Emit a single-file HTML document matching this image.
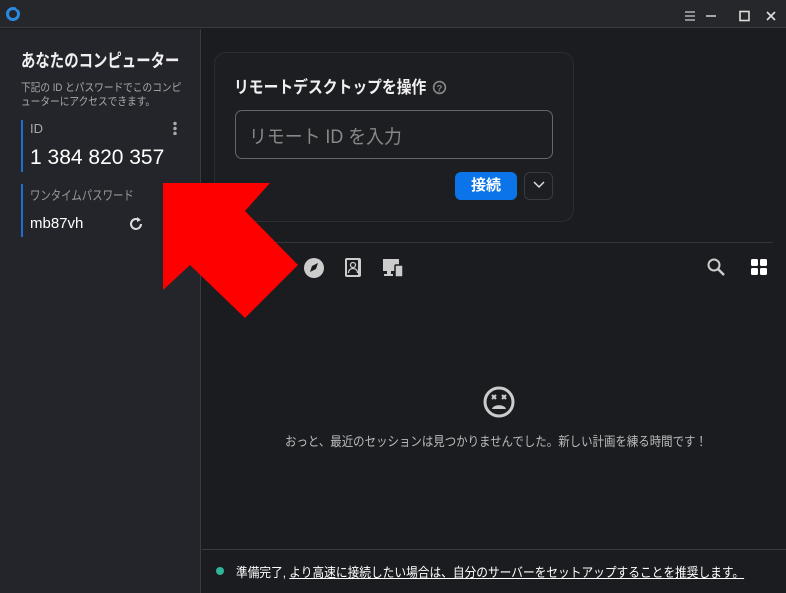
<!DOCTYPE html>
<html><head><meta charset="utf-8"><style>
*{margin:0;padding:0;box-sizing:border-box}
body{width:786px;height:593px;background:#1b1c20;font-family:"Liberation Sans","Noto Sans CJK JP",sans-serif;position:relative;overflow:hidden;color:#fff}
.abs{position:absolute}
.sx{transform-origin:0 0;white-space:nowrap}
</style></head><body>
<div class="abs" style="left:0;top:0;width:786px;height:28px;background:#26272b;border-bottom:1px solid #3a3b40"></div>
<svg class="abs" style="left:5px;top:6px" width="16" height="16" viewBox="0 0 16 16"><circle cx="8" cy="8" r="5.5" fill="none" stroke="#2a8ae0" stroke-width="3"/><path d="M12 3 L14 1" stroke="#26272b" stroke-width="3"/></svg>
<svg class="abs" style="left:683px;top:9px" width="100" height="14" viewBox="0 0 100 14"><path d="M2 3h10M2 7h10M2 11h10" stroke="#ccc" stroke-width="1.2"/><path d="M23 7h10" stroke="#ddd" stroke-width="1.4"/><rect x="57" y="2.5" width="9" height="9" fill="none" stroke="#ddd" stroke-width="1.6"/><path d="M84 3l8 8M92 3l-8 8" stroke="#ddd" stroke-width="1.6"/></svg>
<div class="abs" style="left:0;top:29px;width:201px;height:564px;background:#24252a;border-right:1px solid #3a3b40"></div>
<div class="abs sx" style="left:21px;top:47px;font-size:18px;font-weight:bold;color:#f0f0f0;transform:scaleX(0.8)">あなたのコンピューター</div>
<div class="abs sx" style="left:21px;top:81px;font-size:11px;line-height:14px;color:#aaa;transform:scaleX(0.88)">下記の ID とパスワードでこのコンピ<br>ューターにアクセスできます。</div>
<div class="abs" style="left:21px;top:120px;width:2px;height:52px;background:#1f6fd0"></div>
<div class="abs" style="left:30px;top:121px;font-size:13px;color:#aaa">ID</div>
<div class="abs" style="left:173px;top:121px;width:4px;height:14px;background:radial-gradient(circle,#aaa 1.5px,transparent 2px) 0 0/4px 5px"></div>
<div class="abs" style="left:30px;top:146px;font-size:21px;color:#fff">1 384 820 357</div>
<div class="abs" style="left:21px;top:184px;width:2px;height:53px;background:#1f6fd0"></div>
<div class="abs sx" style="left:30px;top:185px;font-size:13px;color:#999;transform:scaleX(0.8)">ワンタイムパスワード</div>
<div class="abs" style="left:30px;top:215px;font-size:15px;color:#fff">mb87vh</div>
<svg class="abs" style="left:127px;top:215px" width="18" height="18" viewBox="0 0 18 18"><path d="M14 9a5 5 0 1 1-2-4" fill="none" stroke="#ddd" stroke-width="2"/><path d="M10 2l4 3-4 2z" fill="#ddd"/></svg>
<div class="abs" style="left:214px;top:52px;width:360px;height:170px;border:1px solid #2c2d32;border-radius:12px;background:#1d1e22"></div>
<div class="abs sx" style="left:234px;top:73px;font-size:17px;font-weight:bold;color:#f0f0f0;transform:scaleX(0.87)">リモートデスクトップを操作</div>
<svg class="abs" style="left:432px;top:80px" width="15" height="15" viewBox="0 0 14 14"><circle cx="7" cy="7" r="5.5" fill="none" stroke="#888" stroke-width="1.5"/><text x="7" y="10.5" font-size="9" fill="#888" text-anchor="middle" font-family="Liberation Sans" font-weight="bold">?</text></svg>
<div class="abs" style="left:235px;top:110px;width:318px;height:49px;border:1px solid #666;border-radius:7px"></div>
<div class="abs sx" style="left:249px;top:122px;font-size:19px;color:#888;transform:scaleX(0.94)">リモート ID を入力</div>
<div class="abs" style="left:455px;top:172px;width:62px;height:28px;background:#0a74e8;border-radius:6px;font-size:15px;font-weight:bold;text-align:center;line-height:28px">接続</div>
<div class="abs" style="left:524px;top:172px;width:29px;height:28px;border:1px solid #3a3b40;border-radius:6px"></div>
<svg class="abs" style="left:532px;top:180px" width="14" height="10"><path d="M2 2l5 5 5-5" fill="none" stroke="#ddd" stroke-width="1.5"/></svg>
<div class="abs" style="left:214px;top:242px;width:559px;height:1px;background:#33343a"></div>
<svg class="abs" style="left:303px;top:256px" width="120" height="24" viewBox="0 0 120 24"><circle cx="11" cy="12" r="10" fill="#ccc"/><path d="M15 7l-6 3-2 6 6-3z" fill="#1b1c20"/><rect x="42" y="2" width="16" height="19" rx="2" fill="#ccc"/><rect x="44" y="4" width="11" height="15" fill="#1b1c20"/><circle cx="50" cy="9" r="2.5" fill="none" stroke="#ccc" stroke-width="1.3"/><path d="M45.5 17c0-3 2-4.5 4.5-4.5s4.5 1.5 4.5 4.5" fill="none" stroke="#ccc" stroke-width="1.3"/><rect x="80" y="3" width="16" height="12" fill="#ccc"/><rect x="84" y="15" width="4" height="3" fill="#ccc"/><rect x="81" y="18" width="9" height="2" fill="#ccc"/><rect x="92" y="9" width="8" height="12" rx="1" fill="#ccc" stroke="#1b1c20" stroke-width="1.5"/></svg>
<svg class="abs" style="left:706px;top:257px" width="20" height="20" viewBox="0 0 20 20"><circle cx="8" cy="8" r="5.5" fill="none" stroke="#ccc" stroke-width="2"/><path d="M12 12l6 6" stroke="#ccc" stroke-width="2.5"/></svg>
<svg class="abs" style="left:751px;top:259px" width="16" height="16" viewBox="0 0 16 16"><rect x="0" y="0" width="7" height="7" rx="1.5" fill="#fff"/><rect x="9" y="0" width="7" height="7" rx="1.5" fill="#fff"/><rect x="0" y="9" width="7" height="7" rx="1.5" fill="#fff"/><rect x="9" y="9" width="7" height="7" rx="1.5" fill="#fff"/></svg>
<svg class="abs" style="left:482px;top:385px" width="34" height="34" viewBox="0 0 34 34"><circle cx="17" cy="17" r="14" fill="none" stroke="#ccc" stroke-width="3"/><path d="M10 10l4 4M14 10l-4 4M20 10l4 4M24 10l-4 4" stroke="#ccc" stroke-width="2"/><path d="M10 24c1-5 13-5 14 0z" fill="#ccc"/></svg>
<div class="abs sx" style="left:285px;top:431px;font-size:13px;color:#bbb;transform:scaleX(0.88)">おっと、最近のセッションは見つかりませんでした。新しい計画を練る時間です！</div>
<div class="abs" style="left:202px;top:549px;width:584px;height:1px;background:#3a3b40"></div>
<div class="abs" style="left:216px;top:567px;width:8px;height:8px;border-radius:50%;background:#2fb59a"></div>
<div class="abs sx" style="left:236px;top:562px;font-size:13px;color:#fff;transform:scaleX(0.9)">準備完了, <span style="text-decoration:underline">より高速に接続したい場合は、自分のサーバーをセットアップすることを推奨します。</span></div>
<svg class="abs" style="left:0;top:0" width="786" height="593"><polygon points="163,183 270,183 245,211 298,265 245,318 190,265 163,290" fill="#ff0000"/></svg>
</body></html>
